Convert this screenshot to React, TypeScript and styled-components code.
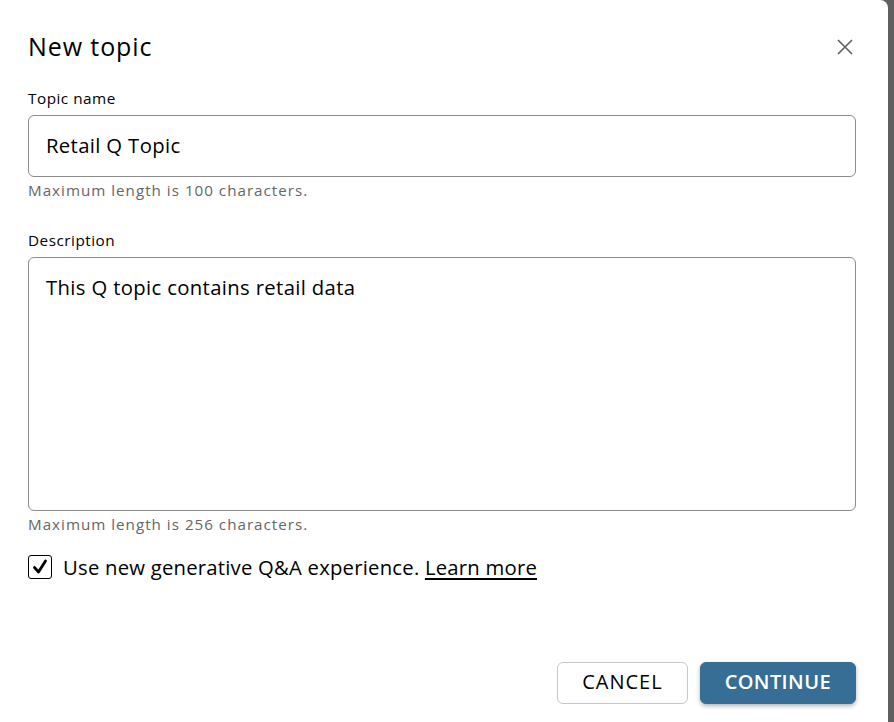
import React from "react";
import styled, { createGlobalStyle } from "styled-components";

const Global = createGlobalStyle`
  html, body { margin: 0; padding: 0; background: #5f5f5f; }
  body { font-family: "Open Sans", "Noto Sans", sans-serif; color: #16191f; }
  * { box-sizing: border-box; }
`;

const Dialog = styled.div`
  width: 888px;
  height: 722px;
  background: #ffffff;
  border-top-right-radius: 8px;
  padding: 28px 32px 18px 28px;
  display: flex;
  flex-direction: column;
`;

const Header = styled.div`
  display: flex;
  align-items: center;
  justify-content: space-between;
  height: 38px;
`;

const Title = styled.h1`
  margin: 0;
  margin-top: -2px;
  font-size: 25px;
  font-weight: 400;
  color: #000;
  letter-spacing: 0.9px;
`;

const CloseButton = styled.button`
  border: none;
  background: none;
  padding: 0;
  margin-right: 2px;
  width: 18px;
  height: 18px;
  display: flex;
  align-items: center;
  justify-content: center;
  color: #5f5f5f;
  cursor: pointer;
`;

const Field = styled.div<{ $top: number }>`
  display: flex;
  flex-direction: column;
  margin-top: ${(p) => p.$top}px;
`;

const Label = styled.label`
  font-size: 15.3px;
  color: #000;
  line-height: 20px;
  margin-bottom: 7px;
  letter-spacing: 0.5px;
`;

const TextInput = styled.div`
  height: 62px;
  border: 1px solid #8c8c8c;
  border-radius: 6px;
  padding: 0 17px 2px;
  display: flex;
  align-items: center;
  font-size: 20.3px;
  color: #000;
  letter-spacing: 0.35px;
`;

const TextArea = styled.div`
  height: 254px;
  border: 1px solid #8c8c8c;
  border-radius: 6px;
  padding: 15px 17px;
  font-size: 20.3px;
  line-height: 28px;
  color: #000;
  letter-spacing: 0.35px;
`;

const Help = styled.div`
  font-size: 15.2px;
  color: #666;
  line-height: 20px;
  margin-top: 3px;
  letter-spacing: 1px;
`;

const CheckRow = styled.div`
  display: flex;
  align-items: center;
  gap: 11px;
  margin-top: 19px;
  font-size: 20.3px;
  color: #000;
  letter-spacing: 0.22px;
`;

const Box = styled.span`
  width: 24px;
  height: 24px;
  border: 1.5px solid #000;
  border-radius: 3px;
  display: flex;
  align-items: center;
  justify-content: center;
`;

const Link = styled.a`
  color: #000;
  text-decoration: underline;
  text-underline-offset: 3px;
  text-decoration-thickness: 2px;
`;

const Footer = styled.div`
  margin-top: auto;
  display: flex;
  justify-content: flex-end;
  gap: 12px;
`;

const Button = styled.button<{ $primary?: boolean }>`
  height: 42px;
  padding: 0 24px 3px;
  font-family: "Open Sans", sans-serif;
  font-size: 20px;
  font-weight: ${(p) => (p.$primary ? 600 : 400)};
  letter-spacing: ${(p) => (p.$primary ? 0.4 : 1)}px;
  border-radius: 6px;
  cursor: pointer;
  color: ${(p) => (p.$primary ? "#fff" : "#000")};
  background: ${(p) => (p.$primary ? "#376e95" : "#fff")};
  border: 1px solid ${(p) => (p.$primary ? "#376e95" : "#c7c7c7")};
  box-shadow: ${(p) => (p.$primary ? "0 2px 4px rgba(0,0,0,0.3)" : "none")};
`;

export default function App() {
  return (
    <>
      <Global />
      <Dialog>
        <Header>
          <Title>New topic</Title>
          <CloseButton aria-label="Close">
            <svg width="16" height="16" viewBox="0 0 16 16">
              <path d="M1 1 L15 15 M15 1 L1 15" stroke="currentColor" strokeWidth="1.6" />
            </svg>
          </CloseButton>
        </Header>
        <Field $top={22}>
          <Label>Topic name</Label>
          <TextInput>Retail Q Topic</TextInput>
          <Help>Maximum length is 100 characters.</Help>
        </Field>
        <Field $top={30}>
          <Label>Description</Label>
          <TextArea>This Q topic contains retail data</TextArea>
          <Help>Maximum length is 256 characters.</Help>
        </Field>
        <CheckRow>
          <Box>
            <svg width="16" height="16" viewBox="0 0 16 16">
              <path d="M2.5 8.5 L6.5 13 L13.5 2" stroke="#000" strokeWidth="2.8" fill="none" strokeLinecap="round" strokeLinejoin="round" />
            </svg>
          </Box>
          <span>
            Use new generative Q&amp;A experience. <Link href="#">Learn more</Link>
          </span>
        </CheckRow>
        <Footer>
          <Button>CANCEL</Button>
          <Button $primary>CONTINUE</Button>
        </Footer>
      </Dialog>
    </>
  );
}
